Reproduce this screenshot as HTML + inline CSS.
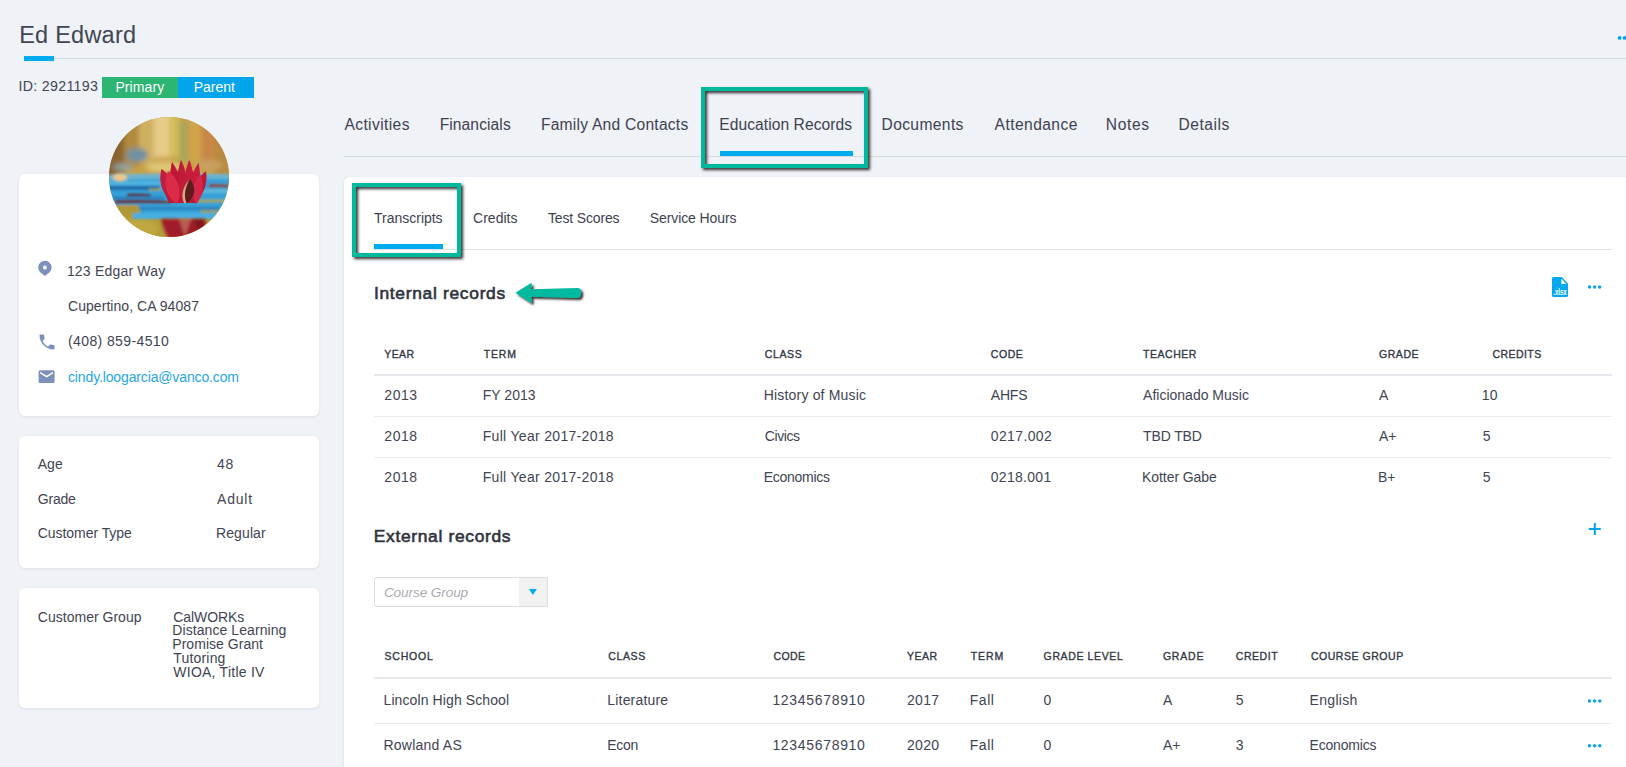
<!DOCTYPE html>
<html>
<head>
<meta charset="utf-8">
<style>
html,body{margin:0;padding:0;}
body{width:1626px;height:767px;overflow:hidden;position:relative;background:#eff2f7;font-family:"Liberation Sans",sans-serif;color:#3b3e4a;}
.t{position:absolute;white-space:nowrap;line-height:1;}
.abs{position:absolute;}
.card{position:absolute;background:#fff;border-radius:6px;box-shadow:0 1px 3px rgba(40,50,80,0.10);}
.hl{position:absolute;left:374px;width:1238px;}
.annot{position:absolute;border:4px solid #00b89c;box-sizing:border-box;filter:drop-shadow(2.5px 2.5px 1.8px rgba(48,42,44,1));}
.dots{position:absolute;width:3.6px;height:3.6px;border-radius:50%;background:#0aa5e6;box-shadow:5.1px 0 0 #0aa5e6,10.2px 0 0 #0aa5e6;}
</style>
</head>
<body>

<div class="abs" style="left:54px;top:58px;width:1572px;height:1px;background:#d5dadc;"></div>
<div class="abs" style="left:24px;top:56px;width:30px;height:5px;background:#00acee;"></div>
<div class="abs" style="left:102px;top:77px;width:76px;height:21px;background:#2db574;"></div>
<div class="abs" style="left:178px;top:77px;width:76px;height:21px;background:#03a5ea;"></div>
<div class="card" style="left:19px;top:174px;width:300px;height:242px;"></div>
<div class="card" style="left:19px;top:436px;width:300px;height:132px;"></div>
<div class="card" style="left:19px;top:588px;width:300px;height:120px;"></div>
<div id="avatar" class="abs" style="left:109px;top:117px;width:120px;height:120px;border-radius:50%;overflow:hidden;">
<svg width="120" height="120" viewBox="0 0 120 120">
<defs>
 <filter id="bl4" x="-30%" y="-30%" width="160%" height="160%"><feGaussianBlur stdDeviation="2.6"/></filter>
 <filter id="bl2" x="-30%" y="-30%" width="160%" height="160%"><feGaussianBlur stdDeviation="1.6"/></filter>
 <filter id="bl1" x="-30%" y="-30%" width="160%" height="160%"><feGaussianBlur stdDeviation="0.9"/></filter>
 <filter id="bl05" x="-30%" y="-30%" width="160%" height="160%"><feGaussianBlur stdDeviation="0.45"/></filter>
</defs>
<rect width="120" height="120" fill="#c09a40"/>
<g filter="url(#bl4)">
 <rect x="-10" y="-10" width="140" height="70" fill="#c8a048"/>
 <rect x="-10" y="-10" width="25" height="70" fill="#8a6432"/>
 <rect x="15" y="-10" width="15" height="60" fill="#b08a3c"/>
 <rect x="30" y="-10" width="15" height="55" fill="#d0b060"/>
 <rect x="45" y="-10" width="15" height="50" fill="#e6cc88"/>
 <rect x="60" y="-10" width="10" height="50" fill="#d4bc58"/>
 <rect x="70" y="5" width="9" height="40" fill="#a8a458"/>
 <rect x="80" y="-10" width="12" height="55" fill="#d0a448"/>
 <rect x="92" y="-10" width="14" height="60" fill="#c88844"/>
 <rect x="106" y="-10" width="20" height="70" fill="#b88a40"/>
 <ellipse cx="28" cy="38" rx="11" ry="7" fill="#6e92a2"/>
 <ellipse cx="14" cy="50" rx="10" ry="4" fill="#90a098"/>
 <ellipse cx="55" cy="50" rx="18" ry="5" fill="#e0c878"/>
 <ellipse cx="100" cy="48" rx="14" ry="5" fill="#c8a060"/>
 <rect x="-10" y="100" width="140" height="30" fill="#b09a38"/>
 <ellipse cx="30" cy="112" rx="20" ry="10" fill="#c0a840"/>
</g>
<g filter="url(#bl1)">
 <path d="M-10 60 Q40 56 130 58 L130 100 L-10 100 Z" fill="#34a0d8"/>
 <path d="M-10 58 Q30 55 130 57 L130 62 Q30 61 -10 64 Z" fill="#78b8d0" opacity="0.8"/>
 <rect x="-5" y="64" width="60" height="4" fill="#58b8e4" opacity="0.8"/>
 <rect x="-5" y="69" width="55" height="4" fill="#1a5a98" opacity="0.75"/>
 <path d="M18 76.5 Q30 76 42 77 L42 79.2 Q30 79 18 79.5 Z" fill="#5a2828" opacity="0.9"/>
 <rect x="-5" y="79.5" width="60" height="3" fill="#2070b0" opacity="0.6"/>
 <path d="M6 83 Q40 82 62 84 L62 86.5 Q30 86 6 86.5 Z" fill="#6a2828" opacity="0.9"/>
 <path d="M100 67 Q110 66.5 120 67.5 L120 70.5 Q110 70 100 70.5 Z" fill="#8a4a38" opacity="0.95"/>
 <rect x="92" y="72" width="30" height="4" fill="#70c0d8" opacity="0.7"/>
 <rect x="88" y="82.5" width="30" height="3" fill="#b8a848" opacity="0.85"/>
 <rect x="40" y="71" width="12" height="3" fill="#c0a848" opacity="0.6"/>
 <path d="M-10 88 L28 88 Q34 92 30 100 L-10 100 Z" fill="#b09838"/>
 <rect x="24" y="95.8" width="86" height="6.2" fill="#48aee0"/>
 <rect x="30" y="90" width="80" height="3" fill="#2a78b0" opacity="0.7"/>
 <rect x="92" y="93" width="30" height="3" fill="#b8a040" opacity="0.7"/>
</g>
<g filter="url(#bl2)">
 <ellipse cx="11" cy="60.5" rx="7.5" ry="4" fill="#f0c890"/>
 <path d="M52 102 Q56 118 62 124 L96 124 Q99 112 96 102 Z" fill="#a01c2c"/>
 <path d="M70 102 L76 120 L82 102 Z" fill="#c88868" opacity="0.6"/>
 <path d="M84 102 L92 118 L95 102 Z" fill="#6a1818" opacity="0.6"/>
</g>
<g filter="url(#bl05)">
 <path d="M60 86 Q53 72 52.5 52 L60 62 L63 45 L68 58 L72 43.4 L76 57 L80 43.4 L85 58 L89.3 46 L91 60 L96.5 55 Q94 72 88 86 Z" fill="#b81a36"/>
 <path d="M72 84 C74.5 73.1 72.3 57.2 63 45 C60.0 60.1 65.0 75.4 72 84Z" fill="#c01838" opacity="1"/>
 <path d="M75 84 C79.1 73.4 79.3 56.9 72 43 C66.8 57.8 69.4 74.1 75 84Z" fill="#c01a38" opacity="1"/>
 <path d="M79 84 C84.3 73.9 86.3 57.6 80.5 43 C73.7 57.1 74.5 73.6 79 84Z" fill="#c81c3c" opacity="1"/>
 <path d="M82 84 C88.7 75.4 93.1 60.5 89.5 46 C80.7 58.1 79.1 73.6 82 84Z" fill="#c81c3c" opacity="1"/>
 <path d="M65 86 C68.4 75.1 65.3 60.8 52.5 52 C48.4 67.0 55.3 79.9 65 86Z" fill="#c41a3a" opacity="1"/>
 <path d="M85 86 C93.2 80.0 99.5 67.7 97 54 C86.1 62.7 82.8 76.0 85 86Z" fill="#c01838" opacity="1"/>
 <path d="M68 87 C72.8 76.8 71.3 63.1 59 54 C53.0 68.0 58.7 80.7 68 87Z" fill="#dc2c4a" opacity="1"/>
 <path d="M87 87 C93.6 80.2 96.7 68.5 91 57 C82.5 66.5 82.4 78.8 87 87Z" fill="#d42646" opacity="1"/>
 <path d="M78.5 86 C85.4 80.7 88.2 71.2 81 62 C72.1 69.6 72.9 79.3 78.5 86Z" fill="#5e1c1c" opacity="1"/>
 <path d="M75 86 C71.5 78 74 69 81 62 C76 70 74.8 78 77.2 86 Z" fill="#d8a880"/>
</g>
</svg>
</div>
<svg class="abs" style="left:0;top:0;" width="340" height="400" viewBox="0 0 340 400">
 <path fill="#7d90bb" fill-rule="evenodd" d="M44.9 275.9 L40.2 272.2 A6.7 6.7 0 1 1 49.6 272.2 Z M44.9 265.5 a2 2 0 1 0 0.01 0 Z"/>
</svg>
<svg class="abs" style="left:36.9px;top:331.7px;" width="20" height="20" viewBox="0 0 24 24"><path fill="#7d90bb" d="M6.62 10.79c1.44 2.83 3.76 5.14 6.590 6.59l2.2-2.2c.27-.27.67-.36 1.02-.24 1.12.37 2.33.57 3.57.57.55 0 1 .45 1 1V20c0 .55-.45 1-1 1-9.39 0-17-7.61-17-17 0-.55.45-1 1-1h3.5c.55 0 1 .45 1 1 0 1.25.2 2.45.57 3.57.11.35.03.74-.25 1.02l-2.2 2.2z"/></svg>
<svg class="abs" style="left:37.3px;top:366.9px;" width="19.2" height="19.2" viewBox="0 0 24 24"><path fill="#7d90bb" d="M20 4H4c-1.1 0-1.99.9-1.99 2L2 18c0 1.1.9 2 2 2h16c1.1 0 2-.9 2-2V6c0-1.1-.9-2-2-2zm0 4l-8 5-8-5V6l8 5 8-5v2z"/></svg>
<div class="abs" style="left:344px;top:156px;width:1282px;height:1px;background:#d5dadc;"></div>
<div class="abs" style="left:720px;top:151px;width:133px;height:5px;background:#00acee;"></div>
<div class="abs" style="left:344px;top:177px;width:1300px;height:600px;background:#fff;border-radius:6px;box-shadow:-1px 0 2px rgba(40,50,80,0.06);"></div>
<div class="abs" style="left:374px;top:249px;width:1238px;height:1px;background:#dde1e6;"></div>
<div class="abs" style="left:374px;top:244px;width:69px;height:5px;background:#00acee;"></div>
<div class="hl" style="top:374px;height:2px;background:#e6eaef;"></div>
<div class="hl" style="top:416px;height:1px;background:#e8ebef;"></div>
<div class="hl" style="top:457px;height:1px;background:#e8ebef;"></div>
<div class="abs" style="left:374px;top:577px;width:174px;height:30px;box-sizing:border-box;border:1px solid #dcdcdc;border-radius:2px;background:#fff;"></div>
<div class="abs" style="left:519px;top:578px;width:28px;height:28px;background:#f2f2f2;"></div>
<div class="hl" style="top:677px;height:2px;background:#e6eaef;"></div>
<div class="hl" style="top:723px;height:1px;background:#e8ebef;"></div>

<div class="t" style="left:19.20px;top:24.00px;font-size:23.5px;color:#414452;letter-spacing:0.240px;">Ed Edward</div>
<div class="t" style="left:18.50px;top:79.00px;font-size:14.2px;color:#414452;letter-spacing:0.314px;">ID: 2921193</div>
<div class="t" style="left:115.40px;top:80.00px;font-size:14px;color:#fff;letter-spacing:0.097px;">Primary</div>
<div class="t" style="left:193.80px;top:80.00px;font-size:14px;color:#fff;letter-spacing:-0.052px;">Parent</div>
<div class="t" style="left:66.90px;top:264.00px;font-size:14px;color:#414452;letter-spacing:0.194px;">123 Edgar Way</div>
<div class="t" style="left:68.00px;top:299.00px;font-size:14px;color:#414452;letter-spacing:0.052px;">Cupertino, CA 94087</div>
<div class="t" style="left:68.00px;top:334.00px;font-size:14px;color:#414452;letter-spacing:0.388px;">(408) 859-4510</div>
<div class="t" style="left:68.00px;top:370.00px;font-size:14px;color:#1fa6e6;letter-spacing:-0.137px;">cindy.loogarcia@vanco.com</div>
<div class="t" style="left:37.80px;top:457.00px;font-size:14px;color:#414452;letter-spacing:-0.012px;">Age</div>
<div class="t" style="left:217.00px;top:457.00px;font-size:14px;color:#414452;letter-spacing:0.614px;">48</div>
<div class="t" style="left:37.80px;top:492.00px;font-size:14px;color:#414452;letter-spacing:-0.231px;">Grade</div>
<div class="t" style="left:217.00px;top:492.00px;font-size:14px;color:#414452;letter-spacing:0.795px;">Adult</div>
<div class="t" style="left:37.80px;top:526.00px;font-size:14px;color:#414452;letter-spacing:-0.053px;">Customer Type</div>
<div class="t" style="left:216.00px;top:526.00px;font-size:14px;color:#414452;letter-spacing:0.106px;">Regular</div>
<div class="t" style="left:37.80px;top:610.00px;font-size:14px;color:#414452;letter-spacing:0.016px;">Customer Group</div>
<div class="t" style="left:173.30px;top:610.00px;font-size:14px;color:#414452;letter-spacing:-0.080px;">CalWORKs</div>
<div class="t" style="left:172.30px;top:623.00px;font-size:14px;color:#414452;letter-spacing:0.077px;">Distance Learning</div>
<div class="t" style="left:172.30px;top:637.00px;font-size:14px;color:#414452;letter-spacing:0.037px;">Promise Grant</div>
<div class="t" style="left:173.30px;top:651.00px;font-size:14px;color:#414452;letter-spacing:0.178px;">Tutoring</div>
<div class="t" style="left:173.30px;top:665.00px;font-size:14px;color:#414452;letter-spacing:0.245px;">WIOA, Title IV</div>
<div class="t" style="left:344.40px;top:117.00px;font-size:15.6px;color:#3e4150;letter-spacing:0.397px;">Activities</div>
<div class="t" style="left:439.70px;top:117.00px;font-size:15.6px;color:#3e4150;letter-spacing:0.088px;">Financials</div>
<div class="t" style="left:540.90px;top:117.00px;font-size:15.6px;color:#3e4150;letter-spacing:0.241px;">Family And Contacts</div>
<div class="t" style="left:719.30px;top:117.00px;font-size:15.6px;color:#3e4150;letter-spacing:0.059px;">Education Records</div>
<div class="t" style="left:881.50px;top:117.00px;font-size:15.6px;color:#3e4150;letter-spacing:0.379px;">Documents</div>
<div class="t" style="left:994.60px;top:117.00px;font-size:15.6px;color:#3e4150;letter-spacing:0.431px;">Attendance</div>
<div class="t" style="left:1105.80px;top:117.00px;font-size:15.6px;color:#3e4150;letter-spacing:0.640px;">Notes</div>
<div class="t" style="left:1178.40px;top:117.00px;font-size:15.6px;color:#3e4150;letter-spacing:0.539px;">Details</div>
<div class="t" style="left:374.10px;top:211.00px;font-size:14px;color:#3e4150;letter-spacing:-0.021px;">Transcripts</div>
<div class="t" style="left:473.00px;top:211.00px;font-size:14px;color:#3e4150;letter-spacing:0.026px;">Credits</div>
<div class="t" style="left:548.00px;top:211.00px;font-size:14px;color:#3e4150;letter-spacing:-0.164px;">Test Scores</div>
<div class="t" style="left:649.70px;top:211.00px;font-size:14px;color:#3e4150;letter-spacing:-0.085px;">Service Hours</div>
<div class="t" style="left:373.90px;top:285.00px;font-size:17.4px;color:#2f3340;font-weight:normal;-webkit-text-stroke:0.6px #2f3340;letter-spacing:0.698px;">Internal records</div>
<div class="t" style="left:373.80px;top:528.00px;font-size:17.4px;color:#2f3340;font-weight:normal;-webkit-text-stroke:0.6px #2f3340;letter-spacing:0.672px;">External records</div>
<div class="t" style="left:383.90px;top:586.00px;font-size:13.6px;color:#a9abb0;font-style:italic;letter-spacing:-0.102px;">Course Group</div>
<div class="t" style="left:384.30px;top:349.00px;font-size:10.5px;color:#333845;font-weight:normal;-webkit-text-stroke:0.35px #333845;letter-spacing:0.363px;">YEAR</div>
<div class="t" style="left:483.70px;top:349.00px;font-size:10.5px;color:#333845;font-weight:normal;-webkit-text-stroke:0.35px #333845;letter-spacing:0.833px;">TERM</div>
<div class="t" style="left:764.80px;top:349.00px;font-size:10.5px;color:#333845;font-weight:normal;-webkit-text-stroke:0.35px #333845;letter-spacing:0.618px;">CLASS</div>
<div class="t" style="left:990.80px;top:349.00px;font-size:10.5px;color:#333845;font-weight:normal;-webkit-text-stroke:0.35px #333845;letter-spacing:0.556px;">CODE</div>
<div class="t" style="left:1143.10px;top:349.00px;font-size:10.5px;color:#333845;font-weight:normal;-webkit-text-stroke:0.35px #333845;letter-spacing:0.518px;">TEACHER</div>
<div class="t" style="left:1379.00px;top:349.00px;font-size:10.5px;color:#333845;font-weight:normal;-webkit-text-stroke:0.35px #333845;letter-spacing:0.541px;">GRADE</div>
<div class="t" style="left:1492.60px;top:349.00px;font-size:10.5px;color:#333845;font-weight:normal;-webkit-text-stroke:0.35px #333845;letter-spacing:0.420px;">CREDITS</div>
<div class="t" style="left:384.30px;top:388.00px;font-size:14px;color:#414452;letter-spacing:0.547px;">2013</div>
<div class="t" style="left:482.70px;top:388.00px;font-size:14px;color:#414452;letter-spacing:0.044px;">FY 2013</div>
<div class="t" style="left:763.80px;top:388.00px;font-size:14px;color:#414452;letter-spacing:0.175px;">History of Music</div>
<div class="t" style="left:990.80px;top:388.00px;font-size:14px;color:#414452;letter-spacing:-0.200px;">AHFS</div>
<div class="t" style="left:1143.10px;top:388.00px;font-size:14px;color:#414452;">Aficionado Music</div>
<div class="t" style="left:1379.00px;top:388.00px;font-size:14px;color:#414452;">A</div>
<div class="t" style="left:1481.80px;top:388.00px;font-size:14px;color:#414452;letter-spacing:0.214px;">10</div>
<div class="t" style="left:384.30px;top:429.00px;font-size:14px;color:#414452;letter-spacing:0.547px;">2018</div>
<div class="t" style="left:482.70px;top:429.00px;font-size:14px;color:#414452;letter-spacing:0.312px;">Full Year 2017-2018</div>
<div class="t" style="left:764.80px;top:429.00px;font-size:14px;color:#414452;letter-spacing:-0.406px;">Civics</div>
<div class="t" style="left:990.80px;top:429.00px;font-size:14px;color:#414452;letter-spacing:0.371px;">0217.002</div>
<div class="t" style="left:1143.10px;top:429.00px;font-size:14px;color:#414452;letter-spacing:-0.147px;">TBD TBD</div>
<div class="t" style="left:1379.00px;top:429.00px;font-size:14px;color:#414452;">A+</div>
<div class="t" style="left:1482.80px;top:429.00px;font-size:14px;color:#414452;">5</div>
<div class="t" style="left:384.30px;top:470.00px;font-size:14px;color:#414452;letter-spacing:0.547px;">2018</div>
<div class="t" style="left:482.70px;top:470.00px;font-size:14px;color:#414452;letter-spacing:0.312px;">Full Year 2017-2018</div>
<div class="t" style="left:763.80px;top:470.00px;font-size:14px;color:#414452;letter-spacing:-0.284px;">Economics</div>
<div class="t" style="left:990.80px;top:470.00px;font-size:14px;color:#414452;letter-spacing:0.285px;">0218.001</div>
<div class="t" style="left:1142.10px;top:470.00px;font-size:14px;color:#414452;letter-spacing:-0.080px;">Kotter Gabe</div>
<div class="t" style="left:1378.00px;top:470.00px;font-size:14px;color:#414452;">B+</div>
<div class="t" style="left:1482.80px;top:470.00px;font-size:14px;color:#414452;">5</div>
<div class="t" style="left:384.50px;top:651.00px;font-size:10.5px;color:#333845;font-weight:normal;-webkit-text-stroke:0.35px #333845;letter-spacing:0.799px;">SCHOOL</div>
<div class="t" style="left:608.30px;top:651.00px;font-size:10.5px;color:#333845;font-weight:normal;-webkit-text-stroke:0.35px #333845;letter-spacing:0.618px;">CLASS</div>
<div class="t" style="left:773.40px;top:651.00px;font-size:10.5px;color:#333845;font-weight:normal;-webkit-text-stroke:0.35px #333845;letter-spacing:0.456px;">CODE</div>
<div class="t" style="left:907.00px;top:651.00px;font-size:10.5px;color:#333845;font-weight:normal;-webkit-text-stroke:0.35px #333845;letter-spacing:0.497px;">YEAR</div>
<div class="t" style="left:970.70px;top:651.00px;font-size:10.5px;color:#333845;font-weight:normal;-webkit-text-stroke:0.35px #333845;letter-spacing:0.900px;">TERM</div>
<div class="t" style="left:1043.60px;top:651.00px;font-size:10.5px;color:#333845;font-weight:normal;-webkit-text-stroke:0.35px #333845;letter-spacing:0.619px;">GRADE LEVEL</div>
<div class="t" style="left:1162.90px;top:651.00px;font-size:10.5px;color:#333845;font-weight:normal;-webkit-text-stroke:0.35px #333845;letter-spacing:0.816px;">GRADE</div>
<div class="t" style="left:1235.80px;top:651.00px;font-size:10.5px;color:#333845;font-weight:normal;-webkit-text-stroke:0.35px #333845;letter-spacing:0.546px;">CREDIT</div>
<div class="t" style="left:1310.90px;top:651.00px;font-size:10.5px;color:#333845;font-weight:normal;-webkit-text-stroke:0.35px #333845;letter-spacing:0.542px;">COURSE GROUP</div>
<div class="t" style="left:383.50px;top:693.00px;font-size:14px;color:#414452;letter-spacing:0.104px;">Lincoln High School</div>
<div class="t" style="left:607.30px;top:693.00px;font-size:14px;color:#414452;letter-spacing:0.182px;">Literature</div>
<div class="t" style="left:772.40px;top:693.00px;font-size:14px;color:#414452;letter-spacing:0.684px;">12345678910</div>
<div class="t" style="left:907.00px;top:693.00px;font-size:14px;color:#414452;letter-spacing:0.314px;">2017</div>
<div class="t" style="left:969.70px;top:693.00px;font-size:14px;color:#414452;letter-spacing:0.551px;">Fall</div>
<div class="t" style="left:1043.60px;top:693.00px;font-size:14px;color:#414452;">0</div>
<div class="t" style="left:1162.90px;top:693.00px;font-size:14px;color:#414452;">A</div>
<div class="t" style="left:1235.80px;top:693.00px;font-size:14px;color:#414452;">5</div>
<div class="t" style="left:1309.50px;top:693.00px;font-size:14px;color:#414452;letter-spacing:0.328px;">English</div>
<div class="t" style="left:383.50px;top:738.00px;font-size:14px;color:#414452;letter-spacing:0.222px;">Rowland AS</div>
<div class="t" style="left:607.30px;top:738.00px;font-size:14px;color:#414452;letter-spacing:-0.308px;">Econ</div>
<div class="t" style="left:772.40px;top:738.00px;font-size:14px;color:#414452;letter-spacing:0.684px;">12345678910</div>
<div class="t" style="left:907.00px;top:738.00px;font-size:14px;color:#414452;letter-spacing:0.314px;">2020</div>
<div class="t" style="left:969.70px;top:738.00px;font-size:14px;color:#414452;letter-spacing:0.551px;">Fall</div>
<div class="t" style="left:1043.60px;top:738.00px;font-size:14px;color:#414452;">0</div>
<div class="t" style="left:1162.90px;top:738.00px;font-size:14px;color:#414452;">A+</div>
<div class="t" style="left:1235.80px;top:738.00px;font-size:14px;color:#414452;">3</div>
<div class="t" style="left:1309.50px;top:738.00px;font-size:14px;color:#414452;letter-spacing:-0.171px;">Economics</div>

<svg class="abs" style="left:1552px;top:277px;" width="16" height="20" viewBox="0 0 16 20">
 <path fill="#03a9ef" d="M1.5 0 H9.6 L16 6.4 V18.5 A1.5 1.5 0 0 1 14.5 20 H1.5 A1.5 1.5 0 0 1 0 18.5 V1.5 A1.5 1.5 0 0 1 1.5 0 Z"/>
 <path fill="#fff" d="M9.4 1.8 V7 H14.4 Z"/>
 <text x="1.3" y="18.2" font-family="Liberation Sans" font-size="8.2" font-weight="bold" fill="#fff" textLength="13.4" lengthAdjust="spacingAndGlyphs">.xlsx</text>
</svg>
<svg class="abs" style="left:528px;top:589px;" width="10" height="7" viewBox="0 0 10 7"><path d="M0.9 0 H8.9 L4.9 6 Z" fill="#00acee"/></svg>
<svg class="abs" style="left:505px;top:275px;overflow:visible;" width="90" height="40" viewBox="505 275 90 40">
 <defs><filter id="ash" x="-20%" y="-50%" width="140%" height="200%"><feDropShadow dx="2" dy="2" stdDeviation="0.9" flood-color="#2a2020" flood-opacity="0.95"/></filter></defs>
 <path filter="url(#ash)" fill="#00ba9f" d="M515.4 292.8 L530.4 283.6 Q532.2 282.8 531.9 284.8 L531 289.3 L577.9 288.1 Q581.3 288.3 581.2 293 Q581.2 297.6 577.9 297.9 L531.2 296.7 L531.9 301.2 Q532.2 303.3 530.4 302.4 Z"/>
</svg>
<svg class="abs" style="left:0;top:0;" width="1626" height="767" viewBox="0 0 1626 767"><circle cx="1619.6" cy="37.9" r="1.9" fill="#03a5ea"/><circle cx="1624.6" cy="37.9" r="1.9" fill="#03a5ea"/><circle cx="1629.6" cy="37.9" r="1.9" fill="#03a5ea"/><circle cx="1589.5" cy="287" r="1.7" fill="#0aa5e6"/><circle cx="1594.6" cy="287" r="1.7" fill="#0aa5e6"/><circle cx="1599.7" cy="287" r="1.7" fill="#0aa5e6"/><circle cx="1589.4" cy="701" r="1.7" fill="#0aa5e6"/><circle cx="1594.6" cy="701" r="1.7" fill="#0aa5e6"/><circle cx="1599.8" cy="701" r="1.7" fill="#0aa5e6"/><circle cx="1589.4" cy="745.8" r="1.7" fill="#0aa5e6"/><circle cx="1594.6" cy="745.8" r="1.7" fill="#0aa5e6"/><circle cx="1599.8" cy="745.8" r="1.7" fill="#0aa5e6"/><path d="M1594.8 523 V535 M1588.8 529 H1600.8" stroke="#03a5ea" stroke-width="2"/></svg>
<div class="annot" style="left:701px;top:87px;width:167px;height:81px;"></div>
<div class="annot" style="left:352px;top:183px;width:109px;height:74px;"></div>

</body>
</html>
